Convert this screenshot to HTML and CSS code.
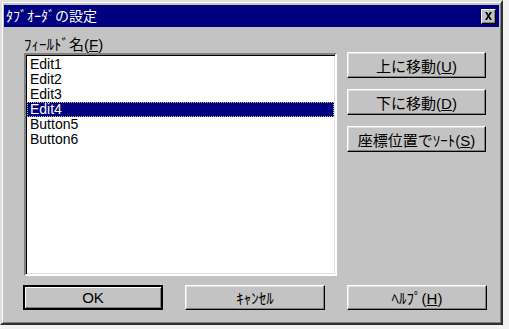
FILE: index.html
```html
<!DOCTYPE html>
<html lang="ja">

<head>
  <meta charset="UTF-8">
  <title>ﾀﾌﾞｵｰﾀﾞの設定</title>
  <link rel="stylesheet" href="styles.css">
</head>

<body>
  <div class="window">
    <div class="titlebar">
      <span class="title">ﾀﾌﾞｵｰﾀﾞの設定</span>
      <div class="close-btn">
        <svg width="9" height="8" viewBox="0 0 9 8">
          <path d="M1 0h2l1.5 2.5L6 0h2L5.5 4 8 8H6L4.5 5.5 3 8H1l2.5-4z" fill="#000" />
        </svg>
      </div>
    </div>

    <div class="main">
      <div class="left-col">
        <div class="label">ﾌｨｰﾙﾄﾞ名(<u>F</u>)</div>
        <ul class="listbox">
          <li>Edit1</li>
          <li>Edit2</li>
          <li>Edit3</li>
          <li class="selected">Edit4</li>
          <li>Button5</li>
          <li>Button6</li>
        </ul>
      </div>
      <div class="right-col">
        <button class="btn">上に移動(<u>U</u>)</button>
        <button class="btn">下に移動(<u>D</u>)</button>
        <button class="btn">座標位置でｿｰﾄ(<u>S</u>)</button>
      </div>
    </div>

    <div class="footer">
      <button class="btn btn-default">OK</button>
      <button class="btn">ｷｬﾝｾﾙ</button>
      <button class="btn">ﾍﾙﾌﾟ(<u>H</u>)</button>
    </div>
  </div>
</body>

</html>
```
FILE: styles.css
```css
* {
  margin: 0;
  padding: 0;
  box-sizing: border-box;
}

body {
  background-color: #f2f2f2;
  font-family: "Liberation Sans", "Noto Sans CJK JP", sans-serif;
  font-size: 14px;
  color: #000;
}

/* Ventana principal */
.window {
  width: 503px;
  height: 325px;
  background-color: #c3c3c3;
  border: 2px solid;
  border-color: #dfdfdf #303030 #303030 #dfdfdf;
  box-shadow: inset 1px 1px #ffffff, inset -1px -1px #808080;
  padding: 3px 2px 2px 2px;
}

.titlebar {
  display: flex;
  align-items: center;
  justify-content: space-between;
  height: 22px;
  background-color: #000080;
  padding: 0 3px 0 2px;
}

.title {
  color: #fff;
  font-size: 14px;
  line-height: 22px;
}

.close-btn {
  display: flex;
  align-items: center;
  justify-content: center;
  width: 15px;
  height: 15px;
  background-color: #c3c3c3;
  border: 1px solid;
  border-color: #fff #000 #000 #fff;
  box-shadow: inset -1px -1px #808080;
}

.main {
  display: flex;
  gap: 10px;
  padding: 10px 0 0 20px;
}

.left-col {
  width: 313px;
}

.label {
  height: 16px;
  line-height: 16px;
  font-size: 15px;
}

.listbox {
  list-style: none;
  height: 223px;
  background-color: #fff;
  border: 2px solid;
  border-color: #808080 #ffffff #ffffff #808080;
  box-shadow: inset 1px 1px #000, inset -1px -1px #dfdfdf;
  padding: 2px 1px;
}

.listbox li {
  height: 15px;
  line-height: 15px;
  padding-left: 3px;
}

.listbox li.selected {
  background-color: #000080;
  color: #fff;
  outline: 1px dotted #c8c880;
  outline-offset: -1px;
}

.right-col {
  display: flex;
  flex-direction: column;
  gap: 11px;
  padding-top: 15px;
}

.btn {
  width: 139px;
  height: 26px;
  font-family: inherit;
  font-size: 15px;
  color: #000;
  background-color: #c3c3c3;
  border: 1px solid;
  border-color: #fff #000 #000 #fff;
  box-shadow: inset -1px -1px #808080, inset 1px 1px #dfdfdf;
}

.footer {
  display: flex;
  gap: 22px;
  padding: 9px 0 0 19px;
}

.footer .btn {
  width: 140px;
  height: 25px;
}

.btn-default {
  border: 2px solid #000;
  box-shadow: inset 1px 1px #fff, inset -1px -1px #808080;
}
```
